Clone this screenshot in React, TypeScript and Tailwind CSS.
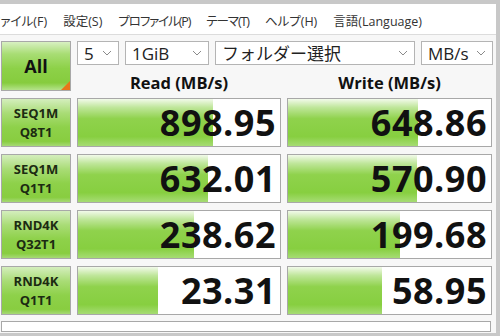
import React from "react";

const ROWS = [
  { l1: "SEQ1M", l2: "Q8T1", read: "898.95", rw: 135, write: "648.86", ww: 130 },
  { l1: "SEQ1M", l2: "Q1T1", read: "632.01", rw: 130, write: "570.90", ww: 129 },
  { l1: "RND4K", l2: "Q32T1", read: "238.62", rw: 116, write: "199.68", ww: 112 },
  { l1: "RND4K", l2: "Q1T1", read: "23.31", rw: 80, write: "58.95", ww: 94 },
];

const MENU = [
  { t: "ファイル(F)", c: "" },
  { t: "設定(S)", c: "" },
  { t: "プロファイル(P)", c: "tracking-[-1.1px]" },
  { t: "テーマ(T)", c: "tracking-[-1.1px]" },
  { t: "ヘルプ(H)", c: "" },
  { t: "言語(Language)", c: "" },
];

function Chevron() {
  return (
    <svg width="10" height="6" viewBox="0 0 10 6" className="shrink-0">
      <polyline points="1,1 5,5 9,1" fill="none" stroke="#8a8a8a" strokeWidth="1" />
    </svg>
  );
}

function Select({ label, w }: { label: string; w: string }) {
  return (
    <div className={`${w} h-[24px] shrink-0 flex items-center justify-between pl-[6px] pr-[6px] bg-white border border-[#b4b4b4] text-[17px] leading-none text-[#222]`}>
      <span>{label}</span>
      <Chevron />
    </div>
  );
}

function Value({ v, w }: { v: string; w: number }) {
  return (
    <div className="relative h-[49px] bg-white border border-[#a8a8a8] overflow-hidden">
      <div
        className="absolute left-0 top-0 bottom-0 bg-[linear-gradient(180deg,#f2faea_0%,#bfe69a_18%,#8fd24c_42%,#87cf40_80%,#a6dc74_100%)]"
        style={{ width: w }}
      />
      <div className="relative h-full flex items-center justify-end pr-[4px] text-[36px] font-bold text-[#111] leading-none tracking-[0.5px]">
        {v}
      </div>
    </div>
  );
}

export default function App() {
  return (
    <div className="w-[500px] h-[336px] bg-[#c8c8c8] pt-[4px] pr-[4px] pb-[3px] overflow-hidden font-['Open_Sans','Noto_Sans_CJK_JP',sans-serif]">
      <div className="h-[329px] bg-[#f7f7f7] overflow-hidden flex flex-col">
        {/* menu */}
        <div className="h-[31px] shrink-0 bg-white border-b border-[#dcdcdc] flex items-center pt-[6px] gap-[16px] -ml-[10px] text-[12.5px] text-[#333] font-['Segoe_UI','Open_Sans','Noto_Sans_CJK_JP',sans-serif] [font-feature-settings:'palt']">
          {MENU.map((m) => (
            <span key={m.t} className={`shrink-0 ${m.c}`}>{m.t}</span>
          ))}
        </div>

        <div className="pl-[1px] pt-[6px] flex flex-col">
          {/* top controls */}
          <div className="flex gap-[6px] shrink-0">
            <div className="relative w-[70px] h-[50px] shrink-0 border border-[#a8a8a8] bg-[linear-gradient(180deg,#d8f0c2_0%,#a8dd74_25%,#8dd148_55%,#86cc3e_85%,#b4e28a_100%)] flex items-center justify-center text-[18px] font-bold text-[#111]">
              All
              <div className="absolute right-0 bottom-0 w-0 h-0 border-l-[9px] border-l-transparent border-b-[9px] border-b-[#e8761a]" />
            </div>
            <div className="flex flex-col">
              <div className="flex gap-[6px]">
                <Select label="5" w="w-[42px]" />
                <Select label="1GiB" w="w-[84px]" />
                <Select label="フォルダー選択" w="w-[200px]" />
                <Select label="MB/s" w="w-[72px]" />
              </div>
              <div className="flex gap-[6px] h-[32px] items-center pt-[5px] text-[16.5px] font-bold text-[#111]">
                <div className="w-[204px] text-center">Read (MB/s)</div>
                <div className="w-[205px] text-center">Write (MB/s)</div>
              </div>
            </div>
          </div>

          {/* results */}
          <div className="flex flex-col gap-[7px] pt-[1px] shrink-0">
            {ROWS.map((r, i) => (
              <div key={i} className="grid grid-cols-[70px_204px_205px] gap-[6px]">
                <div className="h-[49px] border border-[#a8a8a8] bg-[linear-gradient(180deg,#d4eebd_0%,#a9dc76_30%,#8ed14a_60%,#88cd40_90%,#a6d975_100%)] flex flex-col items-center justify-center text-[13px] leading-[19px] font-bold text-[#1c2b12]">
                  <span>{r.l1}</span>
                  <span>{r.l2}</span>
                </div>
                <Value v={r.read} w={r.rw} />
                <Value v={r.write} w={r.ww} />
              </div>
            ))}
          </div>

          {/* status */}
          <div className="mt-[6px] w-[490px] h-[11px] shrink-0 bg-white border border-[#a8a8a8]" />
        </div>
      </div>
    </div>
  );
}
